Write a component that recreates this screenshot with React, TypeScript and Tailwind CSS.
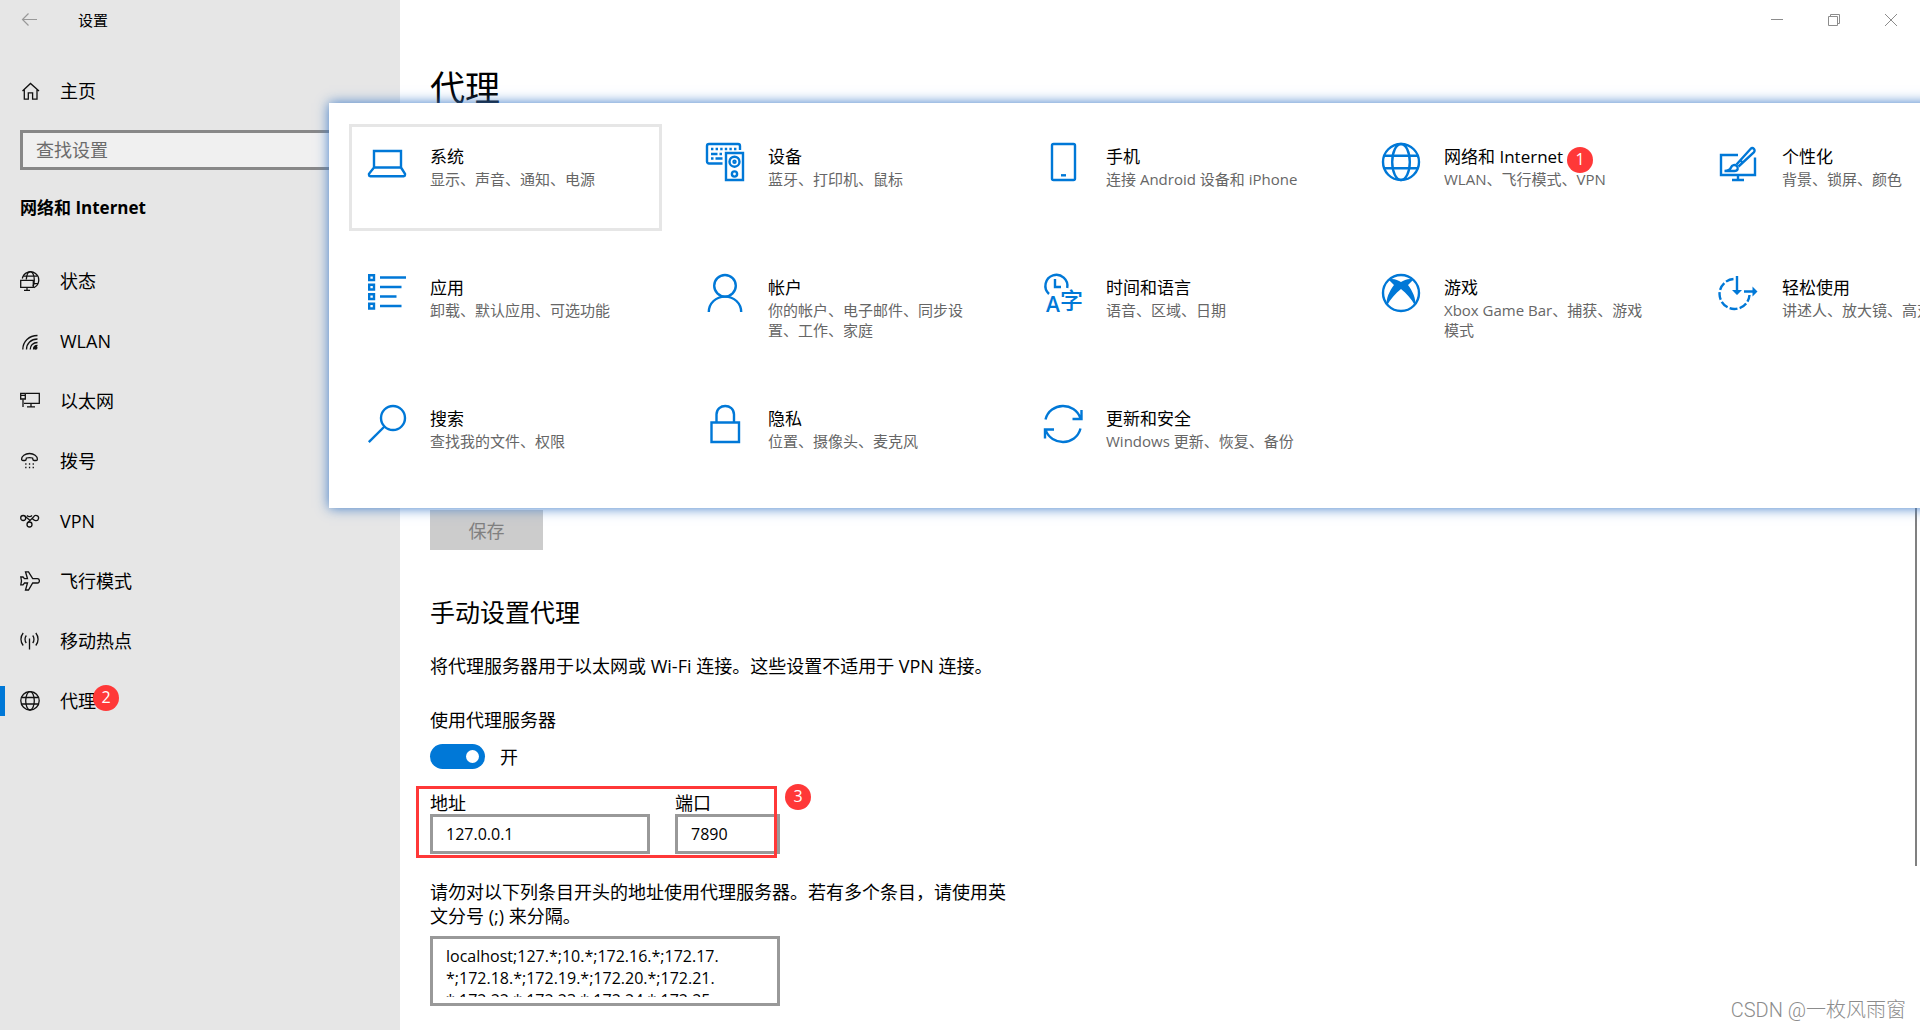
import React from 'react';

type IconProps = { children: React.ReactNode };

const NavIcon: React.FC<IconProps> = ({ children }) => (
  <svg viewBox="0 0 20 20" className="size-5 shrink-0" fill="none" stroke="#111" strokeWidth="1.3" aria-hidden="true">
    {children}
  </svg>
);

const TileIcon: React.FC<IconProps> = ({ children }) => (
  <svg
    viewBox="0 0 38 38"
    className="size-[38px] shrink-0 overflow-visible"
    fill="none"
    stroke="#0078d7"
    strokeWidth="2.4"
    aria-hidden="true"
  >
    {children}
  </svg>
);

const Badge: React.FC<{ value: number }> = ({ value }) => (
  <span className="flex size-[26px] items-center justify-center rounded-full bg-[#ff3838] pb-0.5 text-base leading-none font-normal text-white">
    {value}
  </span>
);

const navItems = [
  {
    label: '状态',
    icon: (
      <>
        <path d="M2.3 7.5A8.3 8.3 0 1 1 14 16.6" />
        <path d="M3.3 5.2h14M14 12.6h4.2M6.3 8.5c.3-4 1.800-7.800 4-7.800s4 3.500 4 8c0 2.500-.4 5-1.200 6.600" />
        <path d="M.7 9.300h12.600v7H.7zM7 16.300v3M4 19.300h6" />
      </>
    )
  },
  {
    label: 'WLAN',
    icon: (
      <>
        <path d="M17.500 4.500C9 4.500 2.800 10.500 2.800 18.500M17.500 8C11 8 6.500 12.500 6.500 18.500M17.500 11.500c-4.500 0-7.300 3-7.300 7" />
        <path d="M17.500 14.300c-2.500 0-4 1.600-4 4.200" />
        <circle cx="15.600" cy="16.800" r="1.300" fill="#111" />
      </>
    )
  },
  {
    label: '以太网',
    icon: (
      <>
        <path d="M6 2.300h13.300v10H4M11 12.300v3.500M7 15.800h8M3 8.500v7.500" />
        <path d="M.7 2.300h4.600v5.700H.7zM.7 4.300h4.600" />
      </>
    )
  },
  {
    label: '拨号',
    icon: (
      <>
        <path d="M1.600 8.200c0-3 3.400-5.700 7.900-5.700s7.900 2.700 7.900 5.700c0 .8-.5 1.300-1.300 1.300h-2c-.8 0-1.200-.5-1.300-1.300l-.2-1.200c-2-.6-4.200-.6-6.200 0l-.2 1.200c-.1.8-.5 1.300-1.300 1.300h-2c-.8 0-1.300-.5-1.300-1.300z" />
        <path d="M5.200 13h1.300M8.900 13h1.300M12.600 13h1.300M5.200 16.500h1.300M8.900 16.500h1.300M12.600 16.500h1.300" />
      </>
    )
  },
  {
    label: 'VPN',
    icon: (
      <>
        <circle cx="3.200" cy="7" r="2.500" />
        <circle cx="9.500" cy="13.500" r="2.500" />
        <path d="M5 5.300l5.200 4.200M8 11.500l5.600-5.500a2.600 2.600 0 1 1 2 3.600c-2 0-2.600-1.600-4-2.600M7 4.500c1.300 1.500 3.700 1.500 5 0" />
      </>
    )
  },
  {
    label: '飞行模式',
    icon: (
      <path d="M5.500.8h3l4.200 6.900h4.800c2.500 0 2.500 4.300 0 4.300h-4.800l-4.200 7h-3l2-7h-3L3 13.800H.8L1.500 9.900.8 6H3l1.500 1.700h3z" />
    )
  },
  {
    label: '移动热点',
    icon: (
      <>
        <path d="M9.500 7.500v11M6.300 4.500c-1.700 2-1.700 5.500 0 7.500M12.700 4.500c1.700 2 1.700 5.500 0 7.500" />
        <path d="M3.200 2c-3 3.600-3 8.900 0 12.500M15.800 2c3 3.600 3 8.900 0 12.500" />
      </>
    )
  },
  {
    label: '代理',
    active: true,
    badge: 2,
    icon: (
      <>
        <circle cx="10" cy="9.800" r="9.200" />
        <ellipse cx="10" cy="9.800" rx="4.300" ry="9.200" />
        <path d="M1.500 6.500h17M1.500 13h17" />
      </>
    )
  }
];

const tiles = [
  {
    title: '系统',
    text: '显示、声音、通知、电源',
    active: true,
    icon: <path d="M6 8h27v16.500H6zM6 24.500l-5 6.300V32c0 .7.500 1.200 1.200 1.200h33.600c.7 0 1.200-.5 1.200-1.200v-1.200l-4-6.300" />
  },
  {
    title: '设备',
    text: '蓝牙、打印机、鼠标',
    icon: (
      <>
        <path d="M16.500 20.500H3a2 2 0 0 1-2-2V3a2 2 0 0 1 2-2h29a2 2 0 0 1 2 2v4" />
        <path d="M5 6h26" strokeDasharray="2.400 2.200" />
        <path d="M5 11h6.500M13.500 11h2.500M5 15.500h2.500M9.500 15.500h7" />
        <path d="M20 10h17v27H20z" />
        <circle cx="28.500" cy="18.700" r="5" />
        <circle cx="28.500" cy="18.700" r="1" />
        <circle cx="28.500" cy="31" r="2.600" />
      </>
    )
  },
  {
    title: '手机',
    text: '连接 Android 设备和 iPhone',
    icon: (
      <>
        <rect x="8" y="1" width="23" height="36" rx="1.500" />
        <path d="M17 32.300h5" />
      </>
    )
  },
  {
    title: '网络和 Internet',
    text: 'WLAN、飞行模式、VPN',
    badge: 1,
    icon: (
      <>
        <circle cx="19" cy="19" r="18" />
        <ellipse cx="19" cy="19" rx="8.800" ry="18" />
        <path d="M2.500 12.700h33M2.500 25.300h33" />
      </>
    )
  },
  {
    title: '个性化',
    text: '背景、锁屏、颜色',
    icon: (
      <>
        <path d="M18 12H1v20h34V14.500M18 32v5M12 37h12" />
        <path d="M4.500 28c4 0 5.500-1 6.500-3.500 1-2.600 4-3.300 5.800-1.500 1.700 1.700 1.300 5-2.300 5z" />
        <path d="M16.500 21.500L30.500 6c1-1 2.500-1 3.400-.1.900.9.900 2.400-.1 3.400L18.500 23.500M20.500 17.500l2.800 2.800" />
      </>
    )
  },
  {
    title: '应用',
    text: '卸载、默认应用、可选功能',
    icon: (
      <path d="M1.200 1.200h4.800v4.800H1.200zM1.200 10.700h4.800v4.800H1.200zM1.200 20.200h4.800v4.800H1.200zM1.200 29.700h4.800v4.800H1.200zM12 3.500h26M12 13h21.500M12 22.500h16.500M12 32h21.500" />
    )
  },
  {
    title: '帐户',
    text: '你的帐户、电子邮件、同步设置、工作、家庭',
    icon: (
      <>
        <circle cx="19" cy="11.800" r="10.800" />
        <path d="M2.800 38c0-8.800 7.200-15.400 16.200-15.400S35.200 29.200 35.200 38" />
      </>
    )
  },
  {
    title: '时间和语言',
    text: '语音、区域、日期',
    icon: (
      <>
        <path d="M5 20A11 11 0 1 1 23.200 14M11 5v8h6" />
        <g fill="#0078d7" stroke="none">
          <text x="2" y="38" fontSize="21" fontWeight="600" fontFamily="Open Sans, sans-serif">
            A
          </text>
          <text x="16" y="35" fontSize="23" fontWeight="500" fontFamily="Noto Sans CJK SC, sans-serif">
            字
          </text>
        </g>
      </>
    )
  },
  {
    title: '游戏',
    text: 'Xbox Game Bar、捕获、游戏模式',
    icon: (
      <>
        <circle cx="19" cy="19" r="18" />
        <path
          d="M6.500 5.500C11 4 16 6 19 8c3-2 8-4 12.500-2.500L26 11c4.500 6 8.500 14 7 20.500C29.500 25 24.500 19.500 19 15 13.500 19.500 8.500 25 5 31.500 3.500 25 7.500 17 12 11z"
          fill="#0078d7"
          stroke="none"
        />
      </>
    )
  },
  {
    title: '轻松使用',
    text: '讲述人、放大镜、高对比度',
    icon: (
      <>
        <path d="M13.500 5A15 15 0 1 0 29.500 21" strokeDasharray="8 2.200" />
        <path d="M17 2v15M24 17.500h9" />
        <path d="M12 16h10l-5 5zM32.500 12.500v10l5-5z" fill="#0078d7" stroke="none" />
      </>
    )
  },
  {
    title: '搜索',
    text: '查找我的文件、权限',
    icon: (
      <>
        <circle cx="25" cy="13" r="12" />
        <path d="M16.500 21.500L.8 37.200" />
      </>
    )
  },
  {
    title: '隐私',
    text: '位置、摄像头、麦克风',
    icon: <path d="M5.500 17.500h27.500V37H5.500zM10.500 17.500V9.500c0-11.400 17.500-11.400 17.500 0v8" />
  },
  {
    title: '更新和安全',
    text: 'Windows 更新、恢复、备份',
    icon: (
      <>
        <path d="M1.500 14.500C6-3 31-3.500 36.500 13.500M37.500 5v9H28.500" />
        <path d="M36.500 23.500C32 41 7 41.500 1.500 24.500M1 33.500v-9h9" />
      </>
    )
  }
];

const bypassList = [
  'localhost;127.*;10.*;172.16.*;172.17.',
  '*;172.18.*;172.19.*;172.20.*;172.21.',
  '*;172.22.*;172.23.*;172.24.*;172.25.'
].join('\n');

const Sidebar: React.FC = () => (
  <aside className="w-[400px] shrink-0 bg-[#e6e6e6]">
    <div className="flex h-10 items-center pl-5">
      <button type="button" aria-label="返回" className="w-[58px] text-[#999]">
        <svg viewBox="0 0 20 20" className="size-5" fill="none" stroke="currentColor" strokeWidth="1.200">
          <path d="M17 9.500H2.500M8.500 3.500l-6 6 6 6" />
        </svg>
      </button>
      <span className="text-[15px]">设置</span>
    </div>

    <a href="#home" className="mt-[21px] flex h-[60px] items-center gap-5 px-5">
      <NavIcon>
        <path d="M2.500 10l8-7.500 8.500 7.500M4.300 8.500v9.700h4v-6.400h4.300v6.400h4.400V8.500" />
      </NavIcon>
      主页
    </a>

    <div className="mt-[9px] px-5">
      <input
        type="search"
        aria-label="查找设置"
        placeholder="查找设置"
        className="block h-10 w-full border-3 border-[#888] bg-[#f0f0f0] px-[13px] outline-none placeholder:text-[#6b6b6b]"
      />
    </div>

    <h2 className="mt-[26px] px-5 text-[17px] leading-6 font-bold">网络和 Internet</h2>

    <nav className="mt-[31px]">
      {navItems.map((item) => (
        <a key={item.label} href={`#${item.label}`} className="relative flex h-[60px] items-center gap-5 px-5">
          {item.active && <span className="absolute left-0 h-[30px] w-[5px] bg-[#0078d7]" />}
          <NavIcon>{item.icon}</NavIcon>
          <span className="relative">
            {item.label}
            {item.badge && (
              <span className="absolute -top-1 left-full -ml-[3px]">
                <Badge value={item.badge} />
              </span>
            )}
          </span>
        </a>
      ))}
    </nav>
  </aside>
);

const WindowControls: React.FC = () => (
  <div className="flex h-10 justify-end pr-px text-[#8c8c8c]">
    <button type="button" aria-label="最小化" className="flex w-[57px] items-center justify-center">
      <svg viewBox="0 0 12 12" className="size-3" stroke="currentColor">
        <path d="M0 5.500h12" />
      </svg>
    </button>
    <button type="button" aria-label="还原" className="flex w-[57px] items-center justify-center">
      <svg viewBox="0 0 12 12" className="size-3" fill="none" stroke="currentColor">
        <path d="M.5 2.500h9v9h-9zM2.500 2.500v-2h9v9h-2" />
      </svg>
    </button>
    <button type="button" aria-label="关闭" className="flex w-[57px] items-center justify-center">
      <svg viewBox="0 0 12 12" className="size-3" stroke="currentColor">
        <path d="M0 0l12 12M12 0L0 12" />
      </svg>
    </button>
  </div>
);

const SettingsPanel: React.FC = () => (
  <section className="absolute top-[103px] -right-5 left-[329px] bg-white px-5 pt-[21px] pb-[15px] shadow-[0_0_12px_#3f7cc8]">
    <div className="grid grid-cols-[repeat(5,313px)] gap-x-[25px] gap-y-6">
      {tiles.map((tile) => (
        <a
          key={tile.title}
          href={`#${tile.title}`}
          className={`flex h-[107px] gap-6 border-3 px-4 pt-4 ${
            tile.active ? 'border-[#e6e6e6]' : 'border-transparent'
          }`}
        >
          <TileIcon>{tile.icon}</TileIcon>
          <div className="w-[206px] pt-0.5">
            <h3 className="text-[17px] leading-6">
              <span className="relative">
                {tile.title}
                {tile.badge && (
                  <span className="absolute top-0.5 left-full ml-1">
                    <Badge value={tile.badge} />
                  </span>
                )}
              </span>
            </h3>
            <p className="text-[15px] leading-5 text-[#666]">{tile.text}</p>
          </div>
        </a>
      ))}
    </div>
  </section>
);

const ProxyForm: React.FC = () => (
  <form className="px-[30px] pb-6">
    <h1 className="mt-[22px] text-[35px] leading-[52px]">代理</h1>

    <button type="button" disabled className="mt-[396px] block h-10 w-[113px] bg-[#ccc] pt-0.5 text-[#808080]">
      保存
    </button>

    <h2 className="mt-[46px] text-[25px] leading-8">手动设置代理</h2>
    <p className="mt-[26px]">将代理服务器用于以太网或 Wi-Fi 连接。这些设置不适用于 VPN 连接。</p>

    <label htmlFor="use-proxy" className="mt-[30px] block">
      使用代理服务器
    </label>
    <div className="mt-3 flex h-[25px] items-center gap-[15px]">
      <input
        id="use-proxy"
        type="checkbox"
        role="switch"
        defaultChecked
        className="flex h-[25px] w-[55px] appearance-none items-center justify-end rounded-full bg-[#0078d7] pr-1.5 before:size-[13px] before:rounded-full before:bg-white before:content-['']"
      />
      <span>开</span>
    </div>

    <div className="relative mt-[23px] flex w-[350px] gap-[25px]">
      <div className="w-[220px]">
        <label htmlFor="address" className="block leading-[22px]">
          地址
        </label>
        <input
          id="address"
          type="text"
          defaultValue="127.0.0.1"
          className="block h-10 w-full border-3 border-[#999] px-[13px] text-base outline-none"
        />
      </div>
      <div className="w-[105px]">
        <label htmlFor="port" className="block leading-[22px]">
          端口
        </label>
        <input
          id="port"
          type="text"
          defaultValue="7890"
          className="block h-10 w-full border-3 border-[#999] px-[13px] text-base outline-none"
        />
      </div>
      <div className="pointer-events-none absolute -top-1.5 right-[3px] -bottom-1 -left-[14px] border-3 border-[#ff3838]" />
      <span className="absolute -top-2 left-full ml-[5px]">
        <Badge value={3} />
      </span>
    </div>

    <label htmlFor="bypass" className="mt-[26px] block max-w-[580px]">
      请勿对以下列条目开头的地址使用代理服务器。若有多个条目，请使用英文分号 (;) 来分隔。
    </label>
    <div className="mt-2 w-[350px] border-3 border-[#999] px-[13px] py-1.5">
      <textarea
        id="bypass"
        defaultValue={bypassList}
        className="block h-[52px] w-full resize-none overflow-hidden text-base leading-[22px] outline-none"
      />
    </div>
  </form>
);

export default function App() {
  return (
    <div
      lang="zh-CN"
      className="relative flex min-h-screen overflow-hidden bg-white font-['Open_Sans','Noto_Sans_CJK_SC',sans-serif] text-[18px] leading-6 text-black"
    >
      <Sidebar />
      <main className="min-w-0 flex-1">
        <WindowControls />
        <ProxyForm />
      </main>

      {/* Scrollbar thumb */}
      <div className="absolute top-[508px] right-[3px] h-[358px] w-0.5 bg-[#808080]" />

      <SettingsPanel />

      <span className="absolute right-[14px] bottom-2 font-['Roboto','Noto_Sans_CJK_SC',sans-serif] text-xl leading-6 font-light text-[#8c8c8c]">
        CSDN @一枚风雨窗
      </span>
    </div>
  );
}
